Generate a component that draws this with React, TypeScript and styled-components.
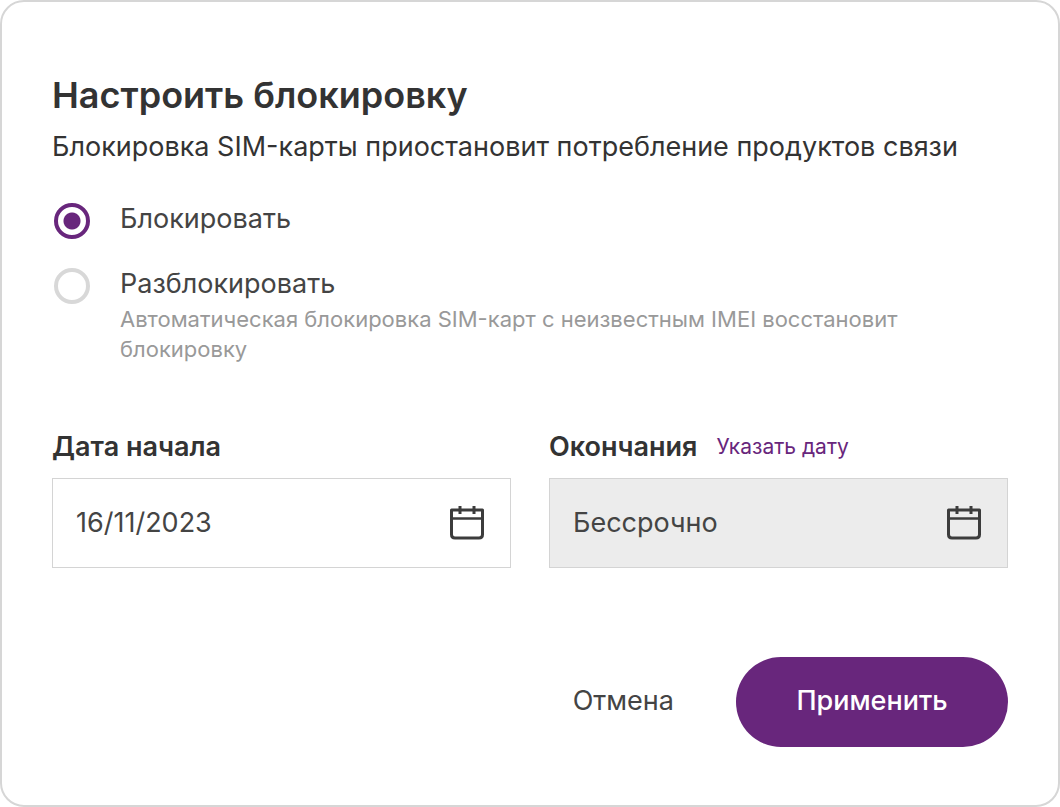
import React, { useState } from 'react';
import styled, { createGlobalStyle } from 'styled-components';

const Global = createGlobalStyle`
  * { box-sizing: border-box; }
  body { margin: 0; background: #fff; }
  body, button, input { font-family: Inter, "Liberation Sans", sans-serif; color: #333; }
`;

const Card = styled.form`
  min-height: 100vh;
  padding: 71px 50px 56px;
  border: 2px solid #d6d6d6;
  border-radius: 24px;
  background: #fff;
`;

const Title = styled.h1`
  margin: 0;
  font-size: 36px;
  line-height: 44px;
  font-weight: 600;
`;

const Lead = styled.p`
  margin: 12px 0 0;
  font-size: 27px;
  line-height: 36px;
`;

const Options = styled.fieldset`
  margin: 36px 0 0;
  padding: 0;
  border: 0;
  display: grid;
  gap: 27px;
`;

const Option = styled.label`
  display: flex;
  gap: 30px;
  padding-left: 2px;
`;

const Radio = styled.input`
  appearance: none;
  flex: none;
  width: 36px;
  height: 36px;
  margin: 2px 0 0;
  border: 4px solid #d8d8d8;
  border-radius: 50%;
  background: #fff;
  &:checked {
    border-color: #68267c;
    background: radial-gradient(circle, #68267c 8px, #fff 9px);
  }
`;

const OptionText = styled.span`
  display: block;
  font-size: 27px;
  line-height: 36px;
  color: #444;
`;

const Hint = styled.span`
  display: block;
  max-width: 820px;
  margin-top: 2px;
  font-size: 22px;
  line-height: 30px;
  color: #999;
`;

const Dates = styled.div`
  display: grid;
  grid-template-columns: repeat(2, minmax(0, 1fr));
  gap: 38px;
  margin-top: 65px;
`;

const FieldHead = styled.div`
  display: flex;
  align-items: center;
  gap: 19px;
  height: 36px;
  margin-bottom: 13px;
`;

const FieldLabel = styled.label`
  font-size: 27px;
  line-height: 36px;
  font-weight: 600;
`;

const DateLink = styled.a`
  font-size: 21px;
  line-height: 30px;
  color: #68267c;
  text-decoration: none;
`;

const Control = styled.div<{ $muted?: boolean }>`
  display: flex;
  align-items: center;
  height: 90px;
  padding: 0 25px 0 23px;
  border: 1px solid #d4d4d4;
  background: ${p => (p.$muted ? '#ececec' : '#fff')};
`;

const DateInput = styled.input`
  flex: 1;
  min-width: 0;
  padding: 0;
  border: 0;
  outline: 0;
  background: transparent;
  font-size: 27px;
  line-height: 36px;
  color: #444;
`;

const Actions = styled.div`
  display: flex;
  justify-content: flex-end;
  gap: 62px;
  margin-top: 89px;
`;

const Cancel = styled.button`
  padding: 0 0 4px;
  border: 0;
  background: none;
  font-size: 27px;
  color: #444;
`;

const Apply = styled.button`
  height: 90px;
  min-width: 272px;
  padding: 0 48px 4px;
  border: 0;
  border-radius: 45px;
  background: #68267c;
  color: #fff;
  font-size: 27px;
  font-weight: 500;
`;

const CalendarIcon = () => (
  <svg width="36" height="36" viewBox="0 0 36 36" fill="none" stroke="#3c3c3c" strokeWidth="3" aria-hidden="true">
    <path d="M2.5 5H33.5V29.5Q33.5 33 30 33H6Q2.5 33 2.5 29.5Z" strokeLinejoin="round" />
    <path d="M2.5 13.5H33.5" strokeWidth="2.5" />
    <path d="M11 1V9M25 1V9" />
  </svg>
);

export default function App() {
  const [mode, setMode] = useState('block');
  const [start, setStart] = useState('16/11/2023');
  return (
    <>
      <Global />
      <Card onSubmit={e => e.preventDefault()}>
        <Title>Настроить блокировку</Title>
        <Lead>Блокировка SIM-карты приостановит потребление продуктов связи</Lead>
        <Options>
          <Option>
            <Radio type="radio" name="mode" checked={mode === 'block'} onChange={() => setMode('block')} />
            <OptionText>Блокировать</OptionText>
          </Option>
          <Option>
            <Radio type="radio" name="mode" checked={mode === 'unblock'} onChange={() => setMode('unblock')} />
            <OptionText>
              Разблокировать
              <Hint>Автоматическая блокировка SIM-карт с неизвестным IMEI восстановит блокировку</Hint>
            </OptionText>
          </Option>
        </Options>
        <Dates>
          <div>
            <FieldHead><FieldLabel htmlFor="start">Дата начала</FieldLabel></FieldHead>
            <Control>
              <DateInput id="start" value={start} onChange={e => setStart(e.target.value)} />
              <CalendarIcon />
            </Control>
          </div>
          <div>
            <FieldHead>
              <FieldLabel htmlFor="end">Окончания</FieldLabel>
              <DateLink href="#end">Указать дату</DateLink>
            </FieldHead>
            <Control $muted>
              <DateInput id="end" value="Бессрочно" readOnly />
              <CalendarIcon />
            </Control>
          </div>
        </Dates>
        <Actions>
          <Cancel type="button">Отмена</Cancel>
          <Apply type="submit">Применить</Apply>
        </Actions>
      </Card>
    </>
  );
}
